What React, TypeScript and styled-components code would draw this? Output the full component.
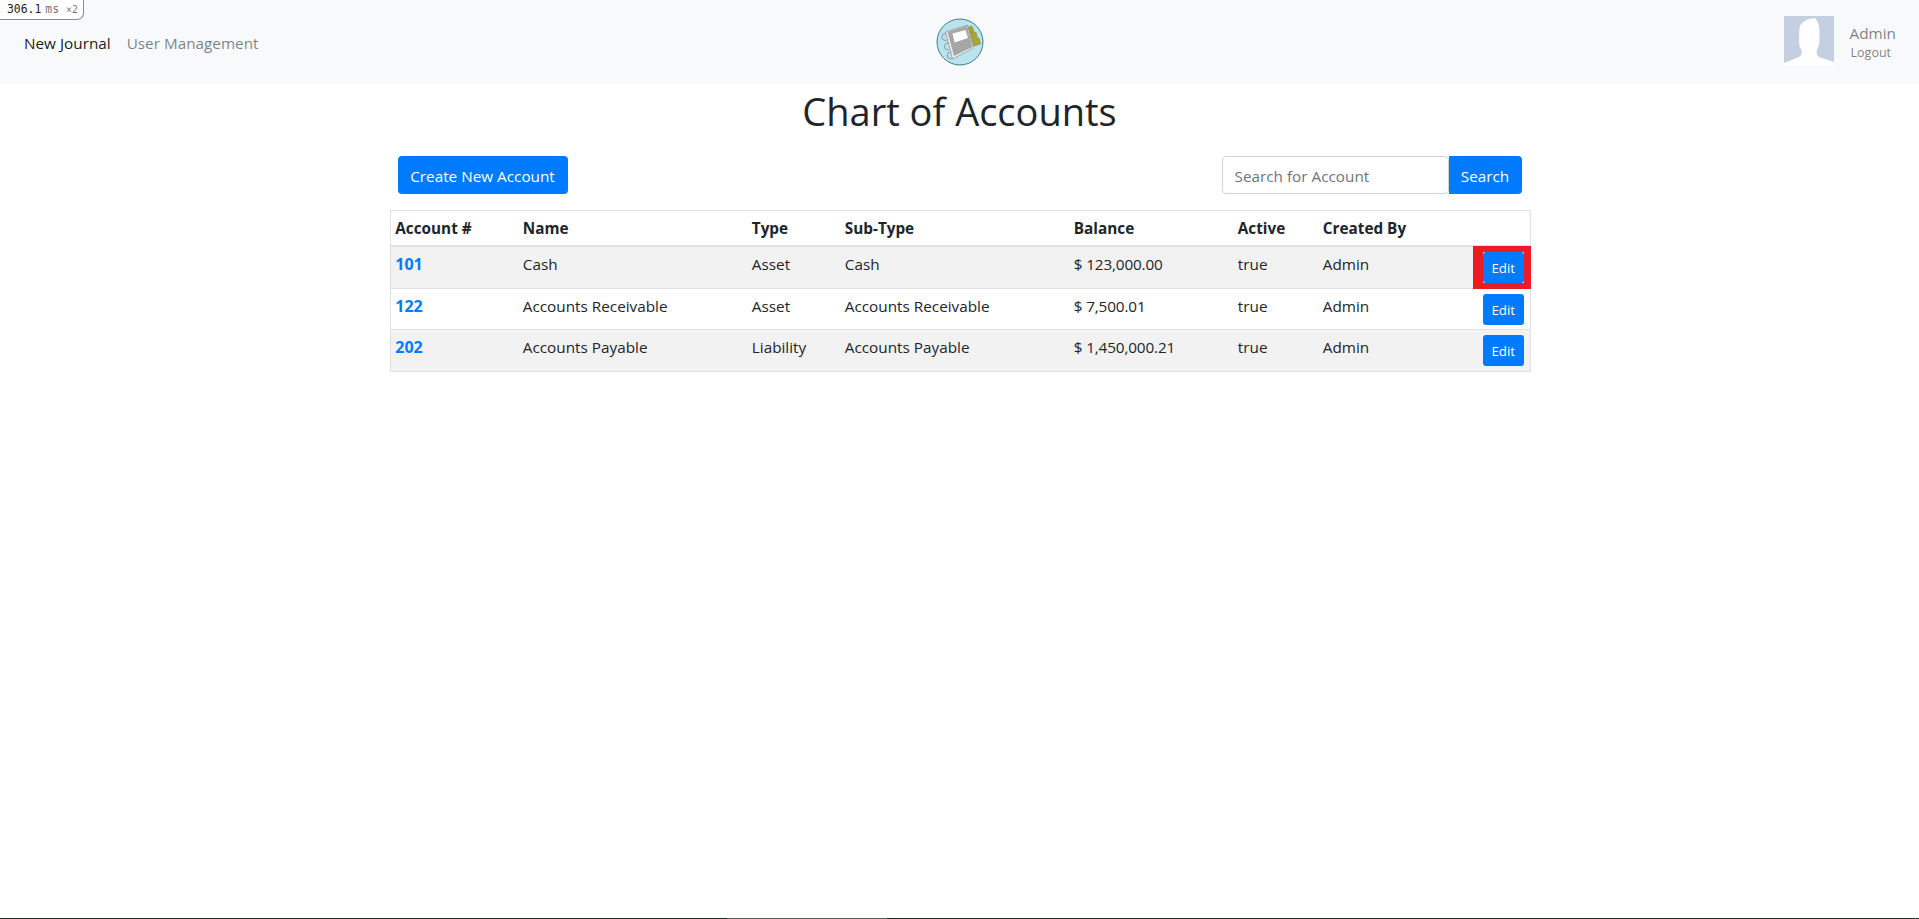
import styled, { createGlobalStyle } from "styled-components";

interface Account {
  number: string;
  name: string;
  type: string;
  subType: string;
  balance: string;
}

const accounts: Account[] = [
  { number: "101", name: "Cash", type: "Asset", subType: "Cash", balance: "$ 123,000.00" },
  { number: "122", name: "Accounts Receivable", type: "Asset", subType: "Accounts Receivable", balance: "$ 7,500.01" },
  { number: "202", name: "Accounts Payable", type: "Liability", subType: "Accounts Payable", balance: "$ 1,450,000.21" },
];

const columnWidths = [128, 229, 93, 229, 164, 85, 160, 52];

const GlobalStyle = createGlobalStyle`
  html, body {
    margin: 0;
    background: #fff;
    color: #212529;
    font-family: "Open Sans", "Noto Sans", "Liberation Sans", sans-serif;
    font-size: 15.3px;
    line-height: 24px;
  }
`;

const Page = styled.div`
  min-height: 919px;
`;

const TimerBadge = styled.div`
  position: absolute;
  top: -1px;
  left: 0;
  display: flex;
  align-items: baseline;
  gap: 4px;
  width: 84px;
  height: 21px;
  padding-left: 7px;
  box-sizing: border-box;
  background: #fff;
  border: 1px solid #8a8a8a;
  border-left: none;
  border-bottom-right-radius: 7px;
  font-family: "DejaVu Sans Mono", monospace;
  font-size: 11.4px;
  line-height: 19px;
  color: #222;
`;

const TimerUnit = styled.span<{ $small?: boolean }>`
  margin-left: ${(p) => (p.$small ? "3px" : "0")};
  color: #777;
  font-size: ${(p) => (p.$small ? "9.8px" : "11.4px")};
`;

const BottomLine = styled.div`
  position: fixed;
  left: 0;
  right: 0;
  bottom: 0;
  height: 1px;
  background: linear-gradient(
    to right,
    #1c2a1f 727px,
    #555d57 727px,
    #555d57 887px,
    #1c2a1f 887px,
    #1c2a1f 1915px,
    #8a8f8b 1915px,
    #8a8f8b 1916px,
    #1c2a1f 1916px
  );
`;

const NavBar = styled.nav`
  display: grid;
  grid-template-columns: 1fr auto 1fr;
  align-items: center;
  height: 84px;
  padding: 0 23px 0 24px;
  background: #f8f9fa;
`;

const NavLinks = styled.div`
  display: flex;
  gap: 16px;
  padding-top: 2px;
`;

const NavLink = styled.a<{ $active?: boolean }>`
  color: ${(p) => (p.$active ? "rgba(0, 0, 0, 0.9)" : "rgba(0, 0, 0, 0.5)")};
  text-decoration: none;
`;

const Logo = styled.svg`
  display: block;
  width: 48px;
  height: 48px;
`;

const UserBox = styled.div`
  display: flex;
  justify-content: flex-end;
  align-items: center;
  gap: 16px;
`;

const Avatar = styled.svg`
  display: block;
  width: 50px;
  height: 50px;
  margin-bottom: 2px;
`;

const UserText = styled.div`
  display: flex;
  flex-direction: column;
  align-items: flex-start;
  color: rgba(0, 0, 0, 0.5);
`;

const UserName = styled.span`
  line-height: 22px;
`;

const LogoutLink = styled.a`
  margin-left: 1px;
  font-size: 12.5px;
  line-height: 18px;
`;

const Title = styled.h1`
  margin: 0;
  padding-top: 3px;
  text-align: center;
  font-size: 38px;
  font-weight: 400;
  line-height: 48px;
`;

const Container = styled.main`
  width: 1140px;
  margin: 0 auto;
`;

const Toolbar = styled.div`
  display: flex;
  justify-content: space-between;
  align-items: center;
  padding: 21px 8px 16px;
`;

const PrimaryButton = styled.button`
  width: 170px;
  height: 38px;
  padding: 1px 0 0;
  border: none;
  border-radius: 4px;
  background: #007bff;
  color: #fff;
  font: inherit;
`;

const SearchForm = styled.form`
  display: flex;
`;

const SearchInput = styled.input`
  width: 227px;
  height: 38px;
  box-sizing: border-box;
  padding: 1px 12px 0;
  border: 1px solid #ced4da;
  border-radius: 4px;
  color: #495057;
  font: inherit;
  &::placeholder {
    color: #6c757d;
    opacity: 1;
  }
`;

const SearchButton = styled(PrimaryButton)`
  width: 73px;
  border-radius: 0 4px 4px 0;
`;

const Table = styled.table`
  width: 1140px;
  table-layout: fixed;
  border-collapse: collapse;
  border: 1px solid #dee2e6;
`;

const HeaderCell = styled.th`
  padding: 4.8px 4.8px 5.5px;
  border-bottom: 2px solid #dee2e6;
  text-align: left;
  font-weight: 700;
  line-height: 24px;
  vertical-align: bottom;
`;

const Row = styled.tr<{ $striped: boolean }>`
  background: ${(p) => (p.$striped ? "#f2f2f2" : "#fff")};
`;

const Cell = styled.td`
  height: 41.5px;
  box-sizing: border-box;
  padding: 4.8px;
  border-top: 1px solid #dee2e6;
  vertical-align: top;
`;

const BalanceCell = styled(Cell)`
  letter-spacing: -0.15px;
`;

const AccountLink = styled.a`
  color: #007bff;
  font-size: 16px;
  font-weight: 700;
  text-decoration: none;
`;

const EditButton = styled.button<{ $highlighted?: boolean }>`
  position: relative;
  display: block;
  width: 41px;
  height: 31px;
  padding: 1px 0 0;
  border: none;
  border-radius: 3px;
  background: #007bff;
  color: #fff;
  font: inherit;
  font-size: 13.3px;
  &::after {
    content: "";
    display: ${(p) => (p.$highlighted ? "block" : "none")};
    position: absolute;
    top: -6px;
    right: -7px;
    bottom: -6px;
    left: -10px;
    border: solid #ed1c24;
    border-width: 6px 7px 6px 10px;
  }
`;

export default function App() {
  return (
    <Page>
      <GlobalStyle />
      <TimerBadge>
        <span>306.1</span>
        <TimerUnit>ms</TimerUnit>
        <TimerUnit $small>×2</TimerUnit>
      </TimerBadge>
      <NavBar>
        <NavLinks>
          <NavLink $active>New Journal</NavLink>
          <NavLink>User Management</NavLink>
        </NavLinks>
        <Logo viewBox="0 0 48 48">
          <circle cx="24" cy="24" r="23" fill="#b9e4ee" stroke="#3d7d88" strokeWidth="1" />
          <polygon points="30,10 36,8 38,14 32,16" fill="#a9a52f" stroke="#77741f" strokeWidth="0.4" />
          <polygon points="33,16 40,14 41.500,19.500 35,21.500" fill="#a9a52f" stroke="#77741f" strokeWidth="0.4" />
          <polygon points="36,22 43,20 44.500,26 38,28" fill="#a9a52f" stroke="#77741f" strokeWidth="0.4" />
          <polygon points="9.500,14 31.500,7 37.500,30 16.500,41" fill="#ededed" stroke="#7a7a7a" strokeWidth="0.6" />
          <polygon points="11.500,14 31,7.800 36.500,29 18,38" fill="#a6a6a6" />
          <polygon points="16.500,15.500 29.500,12 32,20 18.500,24.500" fill="#fff" />
          <path
            d="M10 15.500a3.500 3.500 0 0 0 -1 7l1.500 -.5M12.500 25a3.500 3.500 0 0 0 -1 7l1.500 -.5M15 34a3.500 3.500 0 0 0 -.5 7l1.500 -.7"
            fill="none"
            stroke="#7a7a7a"
            strokeWidth="0.7"
          />
        </Logo>
        <UserBox>
          <Avatar viewBox="0 0 50 50">
            <rect width="50" height="50" fill="#c5cfe2" />
            <path
              d="M0 50V47L15 41C18 39.500 18 36 17.500 34C15 31 15 26 15 22L15.500 12C17 5 24 3 31 2C35 6 36 13 35.500 22C35.500 26 35 31 33 34C32.500 37 32.500 39.500 35 41L50 46V50Z"
              fill="#fff"
            />
          </Avatar>
          <UserText>
            <UserName>Admin</UserName>
            <LogoutLink>Logout</LogoutLink>
          </UserText>
        </UserBox>
      </NavBar>
      <Container>
        <Title>Chart of Accounts</Title>
        <Toolbar>
          <PrimaryButton>Create New Account</PrimaryButton>
          <SearchForm>
            <SearchInput placeholder="Search for Account" />
            <SearchButton type="button">Search</SearchButton>
          </SearchForm>
        </Toolbar>
        <Table>
          <colgroup>
            {columnWidths.map((w, i) => (
              <col key={i} width={w} />
            ))}
          </colgroup>
          <thead>
            <tr>
              <HeaderCell>Account #</HeaderCell>
              <HeaderCell>Name</HeaderCell>
              <HeaderCell>Type</HeaderCell>
              <HeaderCell>Sub-Type</HeaderCell>
              <HeaderCell>Balance</HeaderCell>
              <HeaderCell>Active</HeaderCell>
              <HeaderCell>Created By</HeaderCell>
              <HeaderCell></HeaderCell>
            </tr>
          </thead>
          <tbody>
            {accounts.map((val, key) => {
              return (
                <Row key={val.number} $striped={key % 2 === 0}>
                  <Cell>
                    <AccountLink>{val.number}</AccountLink>
                  </Cell>
                  <Cell>{val.name}</Cell>
                  <Cell>{val.type}</Cell>
                  <Cell>{val.subType}</Cell>
                  <BalanceCell>{val.balance}</BalanceCell>
                  <Cell>true</Cell>
                  <Cell>Admin</Cell>
                  <Cell>
                    <EditButton $highlighted={key === 0}>Edit</EditButton>
                  </Cell>
                </Row>
              );
            })}
          </tbody>
        </Table>
      </Container>
      <BottomLine />
    </Page>
  );
}
